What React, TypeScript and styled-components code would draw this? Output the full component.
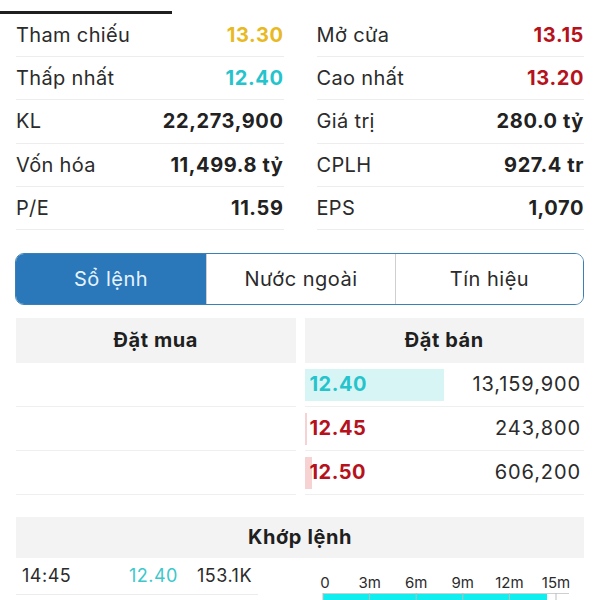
import React from "react";
import styled, { createGlobalStyle } from "styled-components";

const Global = createGlobalStyle`
  html, body { margin: 0; padding: 0; background: #ffffff; }
  body { font-family: Inter, "Noto Sans", "Liberation Sans", sans-serif; color: #262626; }
  * { box-sizing: border-box; }
`;

const Page = styled.div`
  width: 600px;
  height: 600px;
  overflow: hidden;
  display: flex;
  flex-direction: column;
  & > * {
    flex-shrink: 0;
  }
`;

const TopIndicator = styled.div`
  width: 172px;
  height: 3px;
  margin-top: 11px;
  background: #1f1f1f;
`;

const StatsGrid = styled.div`
  display: grid;
  grid-template-columns: 1fr 1fr;
  column-gap: 33px;
  padding: 0 16px;
`;

const StatColumn = styled.div`
  display: flex;
  flex-direction: column;
`;

const StatRow = styled.div`
  height: 43.2px;
  display: flex;
  align-items: center;
  justify-content: space-between;
  border-bottom: 1px solid #ededed;
  font-size: 20px;
`;

const StatLabel = styled.span`
  color: #2b2b2b;
  letter-spacing: 0.35px;
`;

const StatValue = styled.span<{ $color?: string }>`
  font-weight: 700;
  letter-spacing: 0.6px;
  color: ${(p) => p.$color || "#222222"};
`;

const Tabs = styled.div`
  margin: 23px 16px 0 15px;
  height: 52px;
  display: grid;
  grid-template-columns: 190px 189px 1fr;
  border: 1.5px solid #3a7fb5;
  border-radius: 9px;
  overflow: hidden;
`;

const Tab = styled.div<{ $active?: boolean }>`
  display: flex;
  align-items: center;
  justify-content: center;
  font-size: 20px;
  letter-spacing: 0.5px;
  background: ${(p) => (p.$active ? "#2a78ba" : "#ffffff")};
  color: ${(p) => (p.$active ? "#e6f3ff" : "#2b2b2b")};
  & + & {
    border-left: 1px solid #cfcfcf;
  }
`;

const BookGrid = styled.div`
  margin: 13px 16px 0 16px;
  display: grid;
  grid-template-columns: 1fr 1fr;
  column-gap: 9px;
`;

const SideColumn = styled.div`
  display: flex;
  flex-direction: column;
`;

const SectionHeader = styled.div<{ $height?: number }>`
  height: ${(p) => p.$height || 45}px;
  background: #f3f3f3;
  display: flex;
  align-items: center;
  justify-content: center;
  font-size: 20px;
  font-weight: 700;
  letter-spacing: 0.6px;
  color: #1f1f1f;
`;

const BookRow = styled.div`
  height: 44px;
  border-bottom: 1px solid #efefef;
  display: flex;
  align-items: center;
  position: relative;
`;

const DepthBar = styled.div<{ $bg: string }>`
  position: absolute;
  left: 0;
  top: 6px;
  bottom: 5px;
  background: ${(p) => p.$bg};
`;

const BookPrice = styled.span<{ $color: string }>`
  position: relative;
  padding-left: 5px;
  font-size: 20px;
  font-weight: 700;
  letter-spacing: 0.5px;
  color: ${(p) => p.$color};
`;

const BookVolume = styled.span`
  position: relative;
  margin-left: auto;
  padding-right: 3px;
  font-size: 20px;
  letter-spacing: 0.9px;
  color: #2b2b2b;
`;

const MatchSection = styled.div`
  margin: 22px 16px 0 16px;
  display: flex;
  flex-direction: column;
`;

const MatchBody = styled.div`
  display: flex;
  align-items: flex-start;
`;

const TradeList = styled.div`
  width: 242px;
  display: flex;
  flex-direction: column;
`;

const TradeRow = styled.div`
  height: 37px;
  display: grid;
  grid-template-columns: 107px 68px 1fr;
  align-items: center;
  padding-left: 6px;
  border-bottom: 1px solid #ececec;
  font-size: 18px;
  letter-spacing: 0.5px;
  color: #2b2b2b;
`;

const TradeCell = styled.span<{ $color?: string }>`
  color: ${(p) => p.$color || "#2b2b2b"};
`;

const ChartBox = styled.div`
  margin-left: 47px;
  margin-top: 9px;
  width: 279px;
  height: 40px;
`;

const ticks = [0, 3, 6, 9, 12, 15];

function TimeChart() {
  const x0 = 18;
  const step = 46.6;
  return (
    <svg width="279" height="40" viewBox="0 0 279 40">
      {ticks.map((t, i) => (
        <text
          key={t}
          x={x0 + i * step + (i === 0 ? 2 : 0)}
          y={21}
          textAnchor="middle"
          fontSize="15"
          fontFamily="Inter, 'Noto Sans', sans-serif"
          fill="#2b2b2b"
        >
          {t === 0 ? "0" : `${t}m`}
        </text>
      ))}
      <line x1={x0} y1={26.5} x2={264} y2={26.5} stroke="#cfcfcf" strokeWidth="1" />
      <rect x={x0} y={27} width={224} height={13} fill="#10eef0" />
      {ticks.map((t, i) => (
        <line
          key={`t${t}`}
          x1={x0 + i * step}
          y1={26}
          x2={x0 + i * step}
          y2={40}
          stroke="#bdbdbd"
          strokeWidth="1"
        />
      ))}
    </svg>
  );
}

const leftStats = [
  { label: "Tham chiếu", value: "13.30", color: "#e8b923" },
  { label: "Thấp nhất", value: "12.40", color: "#25c4cc" },
  { label: "KL", value: "22,273,900" },
  { label: "Vốn hóa", value: "11,499.8 tỷ" },
  { label: "P/E", value: "11.59" },
];

const rightStats = [
  { label: "Mở cửa", value: "13.15", color: "#b5121b" },
  { label: "Cao nhất", value: "13.20", color: "#b5121b" },
  { label: "Giá trị", value: "280.0 tỷ" },
  { label: "CPLH", value: "927.4 tr" },
  { label: "EPS", value: "1,070" },
];

const asks = [
  { price: "12.40", vol: "13,159,900", color: "#25c4cc", bar: "#d8f5f5", w: 139 },
  { price: "12.45", vol: "243,800", color: "#b5121b", bar: "#f6d2d2", w: 2 },
  { price: "12.50", vol: "606,200", color: "#b5121b", bar: "#f6d2d2", w: 7 },
];

export default function App() {
  return (
    <Page>
      <Global />
      <TopIndicator />
      <StatsGrid>
        <StatColumn>
          {leftStats.map((s) => (
            <StatRow key={s.label}>
              <StatLabel>{s.label}</StatLabel>
              <StatValue $color={s.color}>{s.value}</StatValue>
            </StatRow>
          ))}
        </StatColumn>
        <StatColumn>
          {rightStats.map((s) => (
            <StatRow key={s.label}>
              <StatLabel>{s.label}</StatLabel>
              <StatValue $color={s.color}>{s.value}</StatValue>
            </StatRow>
          ))}
        </StatColumn>
      </StatsGrid>

      <Tabs>
        <Tab $active>Sổ lệnh</Tab>
        <Tab>Nước ngoài</Tab>
        <Tab>Tín hiệu</Tab>
      </Tabs>

      <BookGrid>
        <SideColumn>
          <SectionHeader>Đặt mua</SectionHeader>
          <BookRow />
          <BookRow />
          <BookRow />
        </SideColumn>
        <SideColumn>
          <SectionHeader>Đặt bán</SectionHeader>
          {asks.map((a) => (
            <BookRow key={a.price}>
              <DepthBar $bg={a.bar} style={{ width: a.w }} />
              <BookPrice $color={a.color}>{a.price}</BookPrice>
              <BookVolume>{a.vol}</BookVolume>
            </BookRow>
          ))}
        </SideColumn>
      </BookGrid>

      <MatchSection>
        <SectionHeader $height={41}>Khớp lệnh</SectionHeader>
        <MatchBody>
          <TradeList>
            <TradeRow>
              <TradeCell>14:45</TradeCell>
              <TradeCell $color="#3cc8cc">12.40</TradeCell>
              <TradeCell>153.1K</TradeCell>
            </TradeRow>
          </TradeList>
          <ChartBox>
            <TimeChart />
          </ChartBox>
        </MatchBody>
      </MatchSection>
    </Page>
  );
}
